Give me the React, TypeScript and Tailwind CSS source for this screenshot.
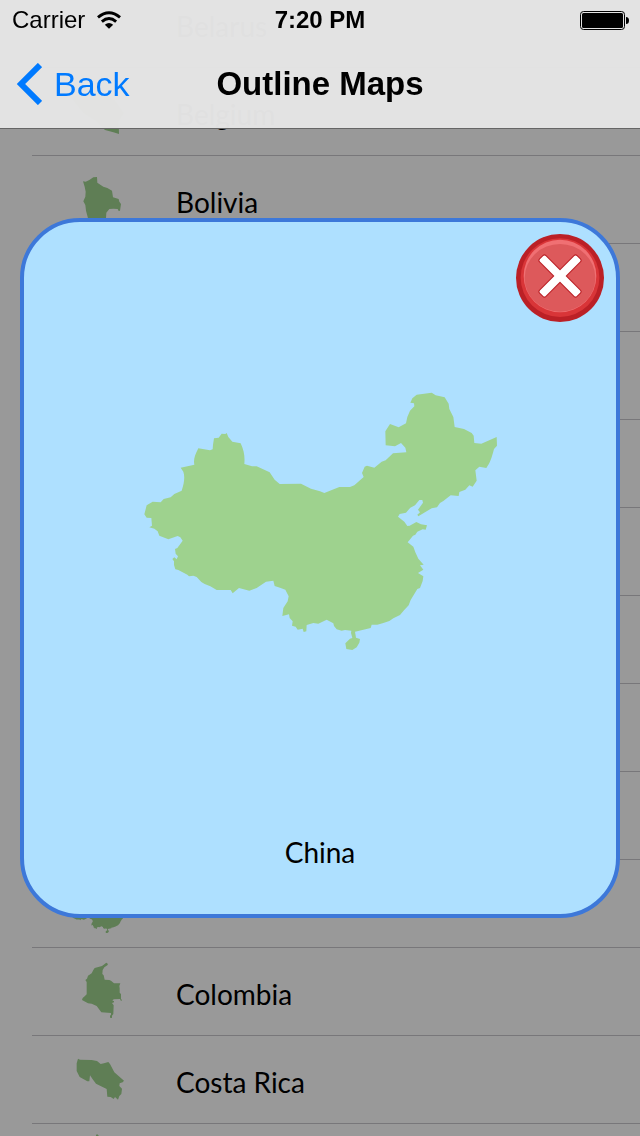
type Outline = { viewBox: string; d: string };
type Country = { id: string; name?: string; outline?: Outline };

const CHINA_PATH =
  "M43 404L50 377 68 366 92 368 101 358 122 353 133 343 155 333C163 310 165 290 160 276L152 264 193 255C190 240 194 228 205 206L240 212 248 209 249 195 252 176 266 174 275 162 286 163 290 160 295 172 307 186 332 191C342 212 345 230 343 253L366 260 380 260 419 278 434 300 449 313 513 312 543 327 570 335 583 340 628 322 660 322 673 317 701 292 696 280 704 261 711 258 733 264 755 246 767 242 789 221 829 218 826 204 813 190 795 200 767 197 766 155 780 133 806 143 828 131 832 112 840 93 853 80 852 71 841 69 847 56 860 45 905 39 917 47 944 53 956 72 958 88 970 112 974 142 1002 148 1025 160 1031 168 1033 190 1054 192 1100 172 1101 198 1092 208C1085 235 1080 250 1069 265L1048 261 1036 272 1040 303 1028 321 1018 317 1006 330 988 337 986 349 962 347 940 364 930 370 921 383 905 386 865 410 862 405 870 398 864 390 879 369 877 361 868 361 855 377 841 384 828 399 809 403 804 411 823 426 832 439 839 438 859 427 873 434 891 437 887 450 878 449 862 456 856 465 849 468 833 488 850 501 856 518 865 537 881 555 870 557 880 570 864 580 880 590 878 604 870 625 862 628 842 661 836 677 822 692 810 706 790 716 778 724 760 730 742 735 725 735 722 745 675 756 678 774 690 778 688 789 680 803 667 811 649 808 646 791 660 777 667 775 663 760 664 753 645 751 635 753 620 749 612 739 610 731 590 720 565 732 550 730 530 736 529 755 521 757 518 747 503 750 497 741 486 738 488 725 479 715 477 704 457 709 460 685 473 665 476 650 466 630 450 624 434 619 430 603 408 606 380 625 358 633 327 625 308 641 302 631 260 631 241 620 224 613 214 607 200 592 190 588 177 590 172 585 145 571 136 569 132 556 132 545 127 538 133 533 140 539 144 530 137 522 135 508 142 505 158 483 151 473 143 469 115 479 88 468 83 455 73 447 58 443 66 438 64 415 50 414Z";

const china: Outline = { viewBox: "42 38 1059 775", d: CHINA_PATH };

const countries: Country[] = [
  { id: "by", name: "Belarus" },
  {
    id: "be",
    name: "Belgium",
    outline: {
      viewBox: "180 216 240 240",
      d: "M210 290L250 280 300 275 345 300 372 340 356 365 357 402 340 397 315 390 290 365 250 340Z",
    },
  },
  {
    id: "bo",
    name: "Bolivia",
    outline: {
      viewBox: "180 480 240 240",
      d: "M249 544L257 545 268 540 280 532 291 531 292 548 310 560 322 564 336 572 339 592 356 597 358 605 363 612 360 632 356 633 353 627 340 626 328 627 319 638 318 655 310 690 268 690 264 655 258 632 256 615 250 604 256 590 257 575 254 560Z",
    },
  },
  { id: "row-4" },
  { id: "row-5" },
  { id: "row-6" },
  { id: "row-7" },
  { id: "row-8" },
  { id: "row-9" },
  { id: "row-10" },
  { id: "cn", outline: china },
  {
    id: "co",
    name: "Colombia",
    outline: {
      viewBox: "0 6 240 240",
      d: "M139 38L144 42 142 46 133 52 128 60 127 72 131 76 134 89 148 90 153 92 162 100 181 100 178 108 179 115 179 128 183 132 183 146 186 151 183 153 180 147 161 148 157 152 162 153 162 157 156 159 161 166 160 192 156 197 156 204 150 203 150 197 153 194 153 189 124 187 110 168 95 161 84 160 66 150 68 144 74 139 80 133 80 96 76 90 81 86 84 77 95 70 100 60 104 54 126 48Z",
    },
  },
  {
    id: "cr",
    name: "Costa Rica",
    outline: {
      viewBox: "0 0 240 240",
      d: "M54 56L60 59 95 60 111 63 122 72 132 70 145 66 150 72 163 97 192 122 188 127 179 130 178 138 186 146 184 162 178 168 174 179 165 171 161 177 152 171 142 170 140 147 108 131 98 118 90 106 88 124 82 124 59 111 50 93 50 70Z",
    },
  },
  {
    id: "row-14",
    outline: { viewBox: "0 0 240 240", d: "M111 18L117 24 116 32 140 60 108 60 108 22Z" },
  },
];

function Shape({ outline, className }: { outline: Outline; className: string }) {
  return (
    <svg viewBox={outline.viewBox} className={className} aria-hidden="true">
      <path d={outline.d} fill="#9ed28e" />
    </svg>
  );
}

function Header() {
  return (
    <header className="relative z-10 border-b border-[#666] bg-[#e4e4e4]/98">
      <div className="grid h-10 grid-cols-3 items-center px-3 text-2xl">
        <div className="flex items-center gap-3">
          <span>Carrier</span>
          <svg viewBox="0 0 74 54" className="h-[18px] w-6" aria-label="Wi-Fi">
            <path d="M3 19Q37 -10 71 19" fill="none" stroke="#000" strokeWidth="9" />
            <path d="M15 32Q37 13 59 32" fill="none" stroke="#000" strokeWidth="9" />
            <path d="M24 42Q37 31 50 42L37 54Z" />
          </svg>
        </div>
        <span className="text-center font-bold">7:20 PM</span>
        <svg viewBox="0 0 49 19" className="-mr-px h-[19px] w-[49px] justify-self-end" aria-label="Battery">
          <rect x="0.5" y="0.5" width="44" height="18" rx="3" fill="none" stroke="#000" />
          <rect x="2" y="2" width="41" height="15" rx="1.5" />
          <path d="M46 6Q49 6 49 9.5T46 13Z" />
        </svg>
      </div>
      <div className="grid h-22 grid-cols-[1fr_auto_1fr] items-center px-4 text-[34px]">
        <button type="button" className="flex items-center gap-3 text-[#007aff]">
          <svg viewBox="0 0 26 42" className="h-[42px] w-[26px]" aria-hidden="true">
            <path d="M24 2L5 21 24 40" fill="none" stroke="currentColor" strokeWidth="6" />
          </svg>
          Back
        </button>
        <h1 className="text-[33px] font-bold">Outline Maps</h1>
      </div>
    </header>
  );
}

function CountryRow({ country }: { country: Country }) {
  return (
    <li className="ml-8 flex h-22 items-center gap-9 border-b border-[#c8c7cc] pl-7">
      {country.outline && <Shape outline={country.outline} className="h-20 w-20" />}
      {!country.outline && <span className="w-20" />}
      {country.name && <span className="pt-1">{country.name}</span>}
    </li>
  );
}

function CloseIcon() {
  return (
    <svg viewBox="0 0 264 264" className="h-22 w-22" aria-hidden="true">
      <circle cx="132" cy="132" r="132" fill="#bb2026" />
      <circle cx="132" cy="131" r="118" fill="#d93538" />
      <circle cx="132" cy="126" r="109" fill="#f07073" />
      <path d="M26 132A106 102 0 0 1 238 132A106 101 0 0 1 26 132Z" fill="#dd595b" />
      <g fill="#bb2026">
        <rect x="51" y="111" width="162" height="30" rx="8" transform="rotate(45 132 126)" />
        <rect x="51" y="111" width="162" height="30" rx="8" transform="rotate(-45 132 126)" />
      </g>
      <g fill="#fff">
        <rect x="54" y="114" width="156" height="24" rx="5" transform="rotate(45 132 126)" />
        <rect x="54" y="114" width="156" height="24" rx="5" transform="rotate(-45 132 126)" />
      </g>
    </svg>
  );
}

function MapDialog() {
  return (
    <div className="fixed inset-0 flex items-center bg-black/40 p-5">
      <section
        role="dialog"
        aria-labelledby="map-name"
        className="relative z-20 flex h-[700px] w-full flex-col items-center rounded-[60px] border-4 border-[#3d78d9] bg-[#aee0ff] pt-[170px] pb-11"
      >
        <Shape outline={china} className="h-[259px] w-[353px]" />
        <h2 id="map-name" className="mt-auto leading-9">
          China
        </h2>
        <button type="button" aria-label="Close" className="absolute top-3 right-3">
          <CloseIcon />
        </button>
      </section>
    </div>
  );
}

export default function App() {
  return (
    <div className="h-screen overflow-hidden bg-white font-['Liberation_Sans',Arial,sans-serif] text-black">
      <Header />
      <main className="-mt-[149px] font-[Lato,'Gill_Sans',sans-serif] text-[28px]">
        <ul>
          {countries.map((country) => (
            <CountryRow key={country.id} country={country} />
          ))}
        </ul>
        <MapDialog />
      </main>
    </div>
  );
}
